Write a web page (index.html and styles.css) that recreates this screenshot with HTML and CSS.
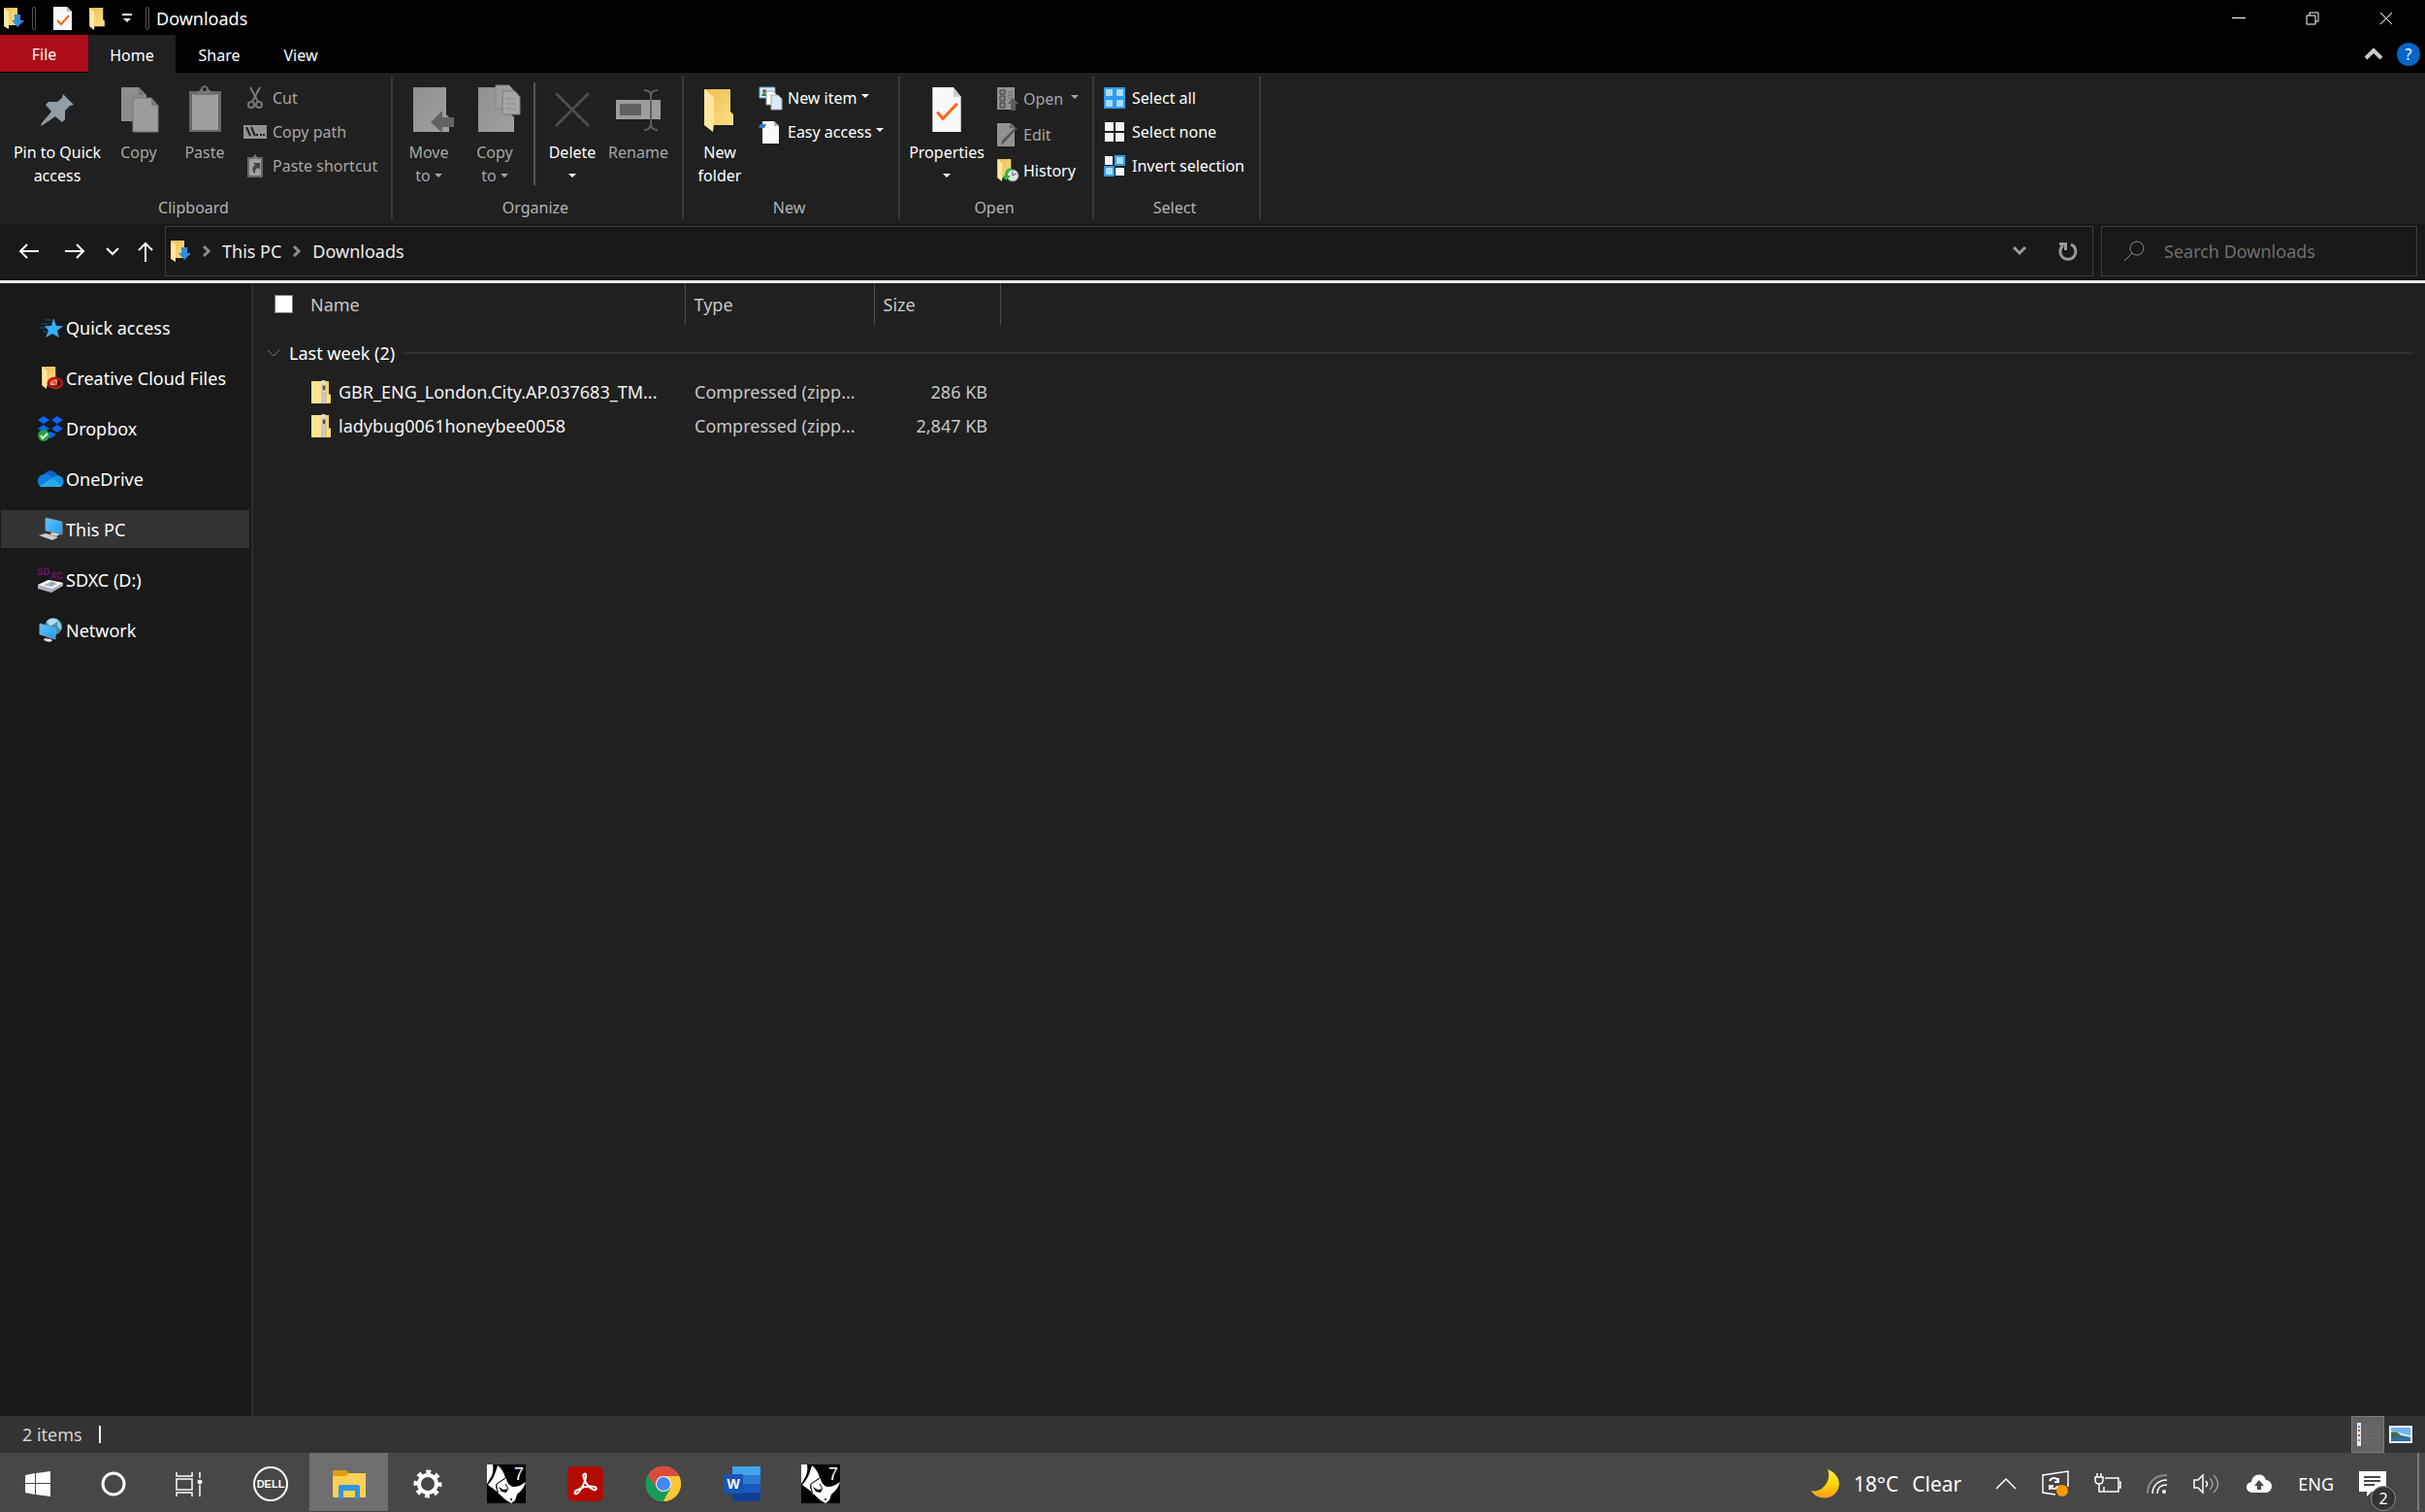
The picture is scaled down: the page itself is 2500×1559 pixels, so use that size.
FILE: index.html
```html
<!DOCTYPE html>
<html lang="en">
<head>
    <meta charset="UTF-8">
    <title>Downloads</title>
    <link rel="stylesheet" href="styles.css">
</head>
<body>
    <!-- shared icons -->
    <svg class="sprite" width="0" height="0" aria-hidden="true">
        <defs>
            <linearGradient id="folder-back" x1="0" y1="0" x2="1" y2="1">
                <stop offset="0" stop-color="#e9bd52"/>
                <stop offset="1" stop-color="#ffe086"/>
            </linearGradient>
            <linearGradient id="moon-fill" x1="0" y1="0" x2="0" y2="1">
                <stop offset="0" stop-color="#ffe94a"/>
                <stop offset="0.5" stop-color="#ffd800"/>
                <stop offset="1" stop-color="#ff9d1c"/>
            </linearGradient>
            <linearGradient id="screen" x1="0" y1="0" x2="1" y2="1">
                <stop offset="0" stop-color="#63c8ff"/>
                <stop offset="1" stop-color="#1c97f0"/>
            </linearGradient>
            <linearGradient id="grey-fill" x1="0" y1="0" x2="1" y2="1">
                <stop offset="0" stop-color="#8f8f8f"/>
                <stop offset="1" stop-color="#a0a0a0"/>
            </linearGradient>
        </defs>
        <symbol id="folder" viewBox="0 0 30 44">
            <path d="M0 0h27v23l3 3v11H6z" fill="url(#folder-back)"/>
            <path d="M0 0l10 8v28l-1 8L0 37z" fill="#ffe7a0"/>
        </symbol>
        <symbol id="folder-down" viewBox="0 0 21 24">
            <path d="M0 1h14v18H4z" fill="url(#folder-back)"/>
            <path d="M0 1l5 4v18l-5-3z" fill="#ffe7a0"/>
            <path d="M11 8h6v6h4l-7 7-6-7h3z" fill="#2f8fe0"/>
        </symbol>
        <symbol id="page-check" viewBox="0 0 30 47">
            <path d="M0 0h22l8 10v37H0z" fill="#f7f9fa"/>
            <path d="M22 0v10h8z" fill="#c8ccce"/>
            <path d="M5 26l6 7 15-16" fill="none" stroke="#ff6210" stroke-width="3"/>
        </symbol>
        <symbol id="zip" viewBox="0 0 20 24">
            <path d="M0 1h18v13l2 1v9H0z" fill="#f5cf68"/>
            <path d="M0 1h10v23H0z" fill="#ffe38e"/>
            <path d="M16 15h4v8h-4z" fill="#ffdd7c"/>
            <path d="M11 1h4v23h-4z" fill="#a9a9a9"/>
            <path d="M13 9v15" stroke="#efefef" stroke-width="3" stroke-dasharray="1 1"/>
            <rect x="10" y="0" width="5" height="5" rx="2" fill="#dcdcdc"/>
            <path d="M12 6h2v4h-2z" fill="#4a4a4a"/>
        </symbol>
        <symbol id="chev-down" viewBox="0 0 16 16">
            <path d="M2 5l6 6 6-6" fill="none" stroke="currentColor" stroke-width="2"/>
        </symbol>
        <symbol id="chev-right" viewBox="0 0 10 14">
            <path d="M2 2l5 5-5 5" fill="none" stroke="#8b8b8b" stroke-width="3"/>
        </symbol>
        <symbol id="rhino" viewBox="0 0 40 40">
            <path d="M0 0h40v40H0z" fill="#000"/>
            <path d="M0 0h6c1 6 0 11-3 15l-3 5z" fill="#fff"/>
            <path d="M11 1c4 3 7 8 8 13l-9 6c-1 3 0 6 2 9L1 21C7 15 9 8 11 1z" fill="#fff"/>
            <path d="M12 19l8-5c0 4 3 8 7 9 5 0 9-2 13-5-2 7-6 10-9 13l-2 6-4 3-5-3-9-8-1-10z" fill="#fff"/>
            <path d="M19 14l-9 6c-1 3 0 6 2 9" fill="none" stroke="#000"/>
            <path d="M12 23l5 3 5-1-2 4-5-1z" fill="#000"/>
            <path d="M19 20l3 5" stroke="#000"/>
            <circle cx="25" cy="36" r="1" fill="#000"/>
            <text x="28" y="16" class="rhino-number">7</text>
        </symbol>
    </svg>

    <header class="title-bar">
        <svg class="app-icon" width="21" height="24"><use href="#folder-down"/></svg>
        <span class="bar-mark"></span>
        <button class="quick-btn" aria-label="Properties"><svg width="19" height="24" viewBox="0 0 19 24"><path d="M0 0h14l5 5v19H0z" fill="#f7f9fa"/><path d="M14 0v5h5z" fill="#b9bdbf"/><path d="M4 14l4 4 8-9" fill="none" stroke="#ff6210" stroke-width="2"/></svg></button>
        <button class="quick-btn" aria-label="New folder"><svg width="16" height="23"><use href="#folder"/></svg></button>
        <button class="quick-btn" aria-label="Customize toolbar"><svg width="10" height="10" viewBox="0 0 10 10"><path d="M0 0h10v2H0zM1 5h8l-4 4z" fill="#fff"/></svg></button>
        <span class="bar-mark"></span>
        <h1>Downloads</h1>
        <div class="window-controls">
            <button aria-label="Minimize"><svg width="14" height="14" viewBox="0 0 14 14"><path d="M0 6h14v1H0z" fill="#fff"/></svg></button>
            <button aria-label="Restore"><svg width="14" height="14" viewBox="0 0 14 14" fill="none" stroke="#fff"><path d="M1 4h9v9H1zM4 4V1h9v9h-3"/></svg></button>
            <button aria-label="Close"><svg width="14" height="14" viewBox="0 0 14 14"><path d="M1 1l12 12M13 1L1 13" stroke="#fff"/></svg></button>
        </div>
    </header>

    <nav class="tabs">
        <button class="tab file">File</button>
        <button class="tab active">Home</button>
        <button class="tab">Share</button>
        <button class="tab view">View</button>
        <div class="tab-tools">
            <button aria-label="Collapse ribbon"><svg width="20" height="13" viewBox="0 0 20 13"><path d="M2 11l8-8 8 8" fill="none" stroke="#c9c9c9" stroke-width="4"/></svg></button>
            <button class="help" aria-label="Help">?</button>
        </div>
    </nav>

    <section class="ribbon">
        <div class="group clipboard">
            <div class="tools">
                <button class="big pin">
                    <svg width="48" height="48" viewBox="0 0 48 48"><path d="M30 9l11 11-4 1-5 5v9l-3 3-7-6L9 41l-2 1 1-3 10-12-6-7 3-3 9 0 5-4z" fill="#919ea5"/></svg>
                    Pin to Quick<br>access
                </button>
                <button class="big copy off">
                    <svg width="48" height="48" viewBox="0 0 48 48"><path d="M6 2h18l8 8v27H6z" fill="#8d8d8d"/><path d="M18 13h19l7 8v27H18z" fill="#9c9c9c" stroke="#777"/><path d="M37 13v8h7z" fill="#777"/><path d="M24 2v8h8z" fill="#777"/></svg>
                    Copy
                </button>
                <button class="big paste off">
                    <svg width="48" height="48" viewBox="0 0 48 48"><path d="M8 6h33v42H8z" fill="#666"/><path d="M11 9h27v37H11z" fill="#9d9d9d"/><path d="M13 10l7-6c1-5 7-5 8 0l7 6z" fill="#757575"/><circle cx="24" cy="4" r="2" fill="#202020"/></svg>
                    Paste
                </button>
                <div class="small-list">
                    <button class="small off"><svg width="24" height="24" viewBox="0 0 24 24" fill="none" stroke="#777" stroke-width="2"><path d="M7 1l8 15M17 1L9 16"/><circle cx="8" cy="19" r="3"/><circle cx="16" cy="19" r="3"/></svg>Cut</button>
                    <button class="small off"><svg width="24" height="24" viewBox="0 0 24 24"><path d="M0 5h24v14H0z" fill="#939393"/><path d="M3 7l4 9M8 7l4 9M13 15h2M17 15h2M20 15h2" stroke="#202020" stroke-width="2"/></svg>Copy path</button>
                    <button class="small off"><svg width="24" height="24" viewBox="0 0 24 24"><path d="M4 3h16v21H4z" fill="#666"/><path d="M6 5h12v17H6z" fill="#a0a0a0"/><path d="M8 5l4-5 4 5z" fill="#777"/><path d="M10 9h7v7l-2-2c-3 1-3 3-3 6-4-3-3-7 0-9z" fill="#444"/></svg>Paste shortcut</button>
                </div>
            </div>
            <div class="group-name">Clipboard</div>
        </div>

        <div class="group organize">
            <div class="tools">
                <button class="big off">
                    <svg width="48" height="48" viewBox="0 0 48 48"><path d="M8 2h34v28l3 3v15H8z" fill="url(#grey-fill)"/><path d="M26 38l12-12v7h12v10H38v6z" fill="#626262"/></svg>
                    <span>Move<br>to <i class="caret"></i></span>
                </button>
                <button class="big off">
                    <svg width="48" height="48" viewBox="0 0 48 48"><path d="M7 2h34v28l3 3v15H7z" fill="url(#grey-fill)"/><path d="M25 0h14l5 6v18H25z" fill="#9e9e9e" stroke="#858585"/><path d="M32 6h13l5 6v18H32z" fill="#a5a5a5" stroke="#7d7d7d"/><path d="M35 14h11M35 19h11M35 24h11" stroke="#8e8e8e"/></svg>
                    <span>Copy<br>to <i class="caret"></i></span>
                </button>
                <span class="tool-divider"></span>
                <button class="big">
                    <svg width="48" height="48" viewBox="0 0 48 48"><path d="M7 8l34 34M41 8L7 42" stroke="#4c4c4c" stroke-width="3"/></svg>
                    <span>Delete<br><i class="caret"></i></span>
                </button>
                <button class="big off">
                    <svg width="48" height="48" viewBox="0 0 48 48"><path d="M1 15h46v20H1z" fill="#9d9d9d"/><path d="M5 19h22v12H5z" fill="#606060"/><path d="M30 5c5 0 7 2 7 6v28c0 4-2 7-7 7M44 5c-5 0-7 2-7 6v28c0 4 2 7 7 7" fill="none" stroke="#5d5d5d" stroke-width="2"/></svg>
                    Rename
                </button>
            </div>
            <div class="group-name">Organize</div>
        </div>

        <div class="group new">
            <div class="tools">
                <button class="big">
                    <svg width="48" height="48" viewBox="0 0 48 48"><use href="#folder" x="8" y="4" width="30" height="44"/></svg>
                    New<br>folder
                </button>
                <div class="small-list">
                    <button class="small"><svg width="24" height="24" viewBox="0 0 24 24"><path d="M1 1h16v11H1z" fill="#d3effc" stroke="#5fa3cd"/><path d="M3 10c1-4 5-4 6 0z" fill="#2c7c49"/><circle cx="6" cy="5" r="2" fill="#8a5638"/><path d="M8 5h7l3 3v11H8z" fill="#fff" stroke="#999"/><path d="M13 9h7l4 4v11H13z" fill="#dae9fb" stroke="#aaa"/></svg>New item<i class="caret"></i></button>
                    <button class="small"><svg width="24" height="24" viewBox="0 0 24 24"><path d="M4 1h12l5 5v18H4z" fill="#f7f9fa"/><path d="M16 1v5h5z" fill="#aeb2b4"/><path d="M0 7l2-3h6l-2 4-4 0z" fill="#2d7cc2"/></svg>Easy access<i class="caret"></i></button>
                </div>
            </div>
            <div class="group-name">New</div>
        </div>

        <div class="group open">
            <div class="tools">
                <button class="big properties">
                    <svg width="48" height="48" viewBox="0 0 48 48"><use href="#page-check" x="6" y="2" width="36" height="46"/></svg>
                    <span>Properties<br><i class="caret"></i></span>
                </button>
                <div class="small-list">
                    <button class="small off"><svg width="24" height="24" viewBox="0 0 24 24"><path d="M1 0h18v23H1z" fill="#929292"/><path d="M4 3h5v4H4zM4 9h5v5H4zM4 16h5v5H4z" fill="#858585" stroke="#3c3c3c"/><path d="M12 5h5M12 8h5M12 11h5" stroke="#666"/><path d="M12 17l5-6 6 6h-3v7h-5v-7z" fill="#5c5c5c"/></svg>Open<i class="caret far"></i></button>
                    <button class="small off"><svg width="24" height="24" viewBox="0 0 24 24"><path d="M1 0h14l4 4v20H1z" fill="#929292"/><path d="M14 0v5h5z" fill="#666"/><path d="M22 5L8 20l-3 3 1-5L20 4z" fill="#555"/></svg>Edit</button>
                    <button class="small"><svg width="24" height="24" viewBox="0 0 24 24"><use href="#folder" x="1" y="0" width="16" height="23"/><circle cx="17" cy="17" r="6" fill="#e0e3e6" stroke="#8d8d8d"/><path d="M17 13v4l4-2" fill="none" stroke="#555"/><path d="M16 9c-5 0-7 3-7 8H6l4 5 5-5h-3c0-3 1-5 4-5z" fill="#2eb83a"/></svg>History</button>
                </div>
            </div>
            <div class="group-name">Open</div>
        </div>

        <div class="group select">
            <div class="tools">
                <div class="small-list">
                    <button class="small"><svg width="24" height="24" viewBox="0 0 24 24"><path d="M2 2h9v9H2zM13 2h9v9h-9zM2 13h9v9H2zM13 13h9v9h-9z" fill="#a9dbff" stroke="#2e9bf2" stroke-width="2"/></svg>Select all</button>
                    <button class="small"><svg width="24" height="24" viewBox="0 0 24 24"><path d="M2 2h9v9H2zM13 2h9v9h-9zM2 13h9v9H2zM13 13h9v9h-9z" fill="#f5f6f7"/></svg>Select none</button>
                    <button class="small"><svg width="24" height="24" viewBox="0 0 24 24"><path d="M2 2h8v9H2zM13 14h9v8h-9z" fill="#f5f6f7"/><path d="M13 2h9v9h-9zM2 13h9v9H2z" fill="#a9dbff" stroke="#2e9bf2" stroke-width="2"/></svg>Invert selection</button>
                </div>
            </div>
            <div class="group-name">Select</div>
        </div>
    </section>

    <div class="nav-row">
        <div class="nav-buttons">
            <button aria-label="Back"><svg width="28" height="24" viewBox="0 0 28 24"><path d="M24 12H5M12 5l-7 7 7 7" fill="none" stroke="#fff" stroke-width="2"/></svg></button>
            <button aria-label="Forward"><svg width="28" height="24" viewBox="0 0 28 24"><path d="M5 12h19M17 5l7 7-7 7" fill="none" stroke="#fff" stroke-width="2"/></svg></button>
            <button aria-label="Recent locations"><svg width="16" height="16"><use href="#chev-down"/></svg></button>
            <button aria-label="Up"><svg width="16" height="22" viewBox="0 0 16 22"><path d="M8 22V3M1 10l7-7 7 7" fill="none" stroke="#fff" stroke-width="2"/></svg></button>
        </div>
        <div class="address">
            <svg width="21" height="24"><use href="#folder-down"/></svg>
            <svg class="crumb-arrow" width="10" height="14"><use href="#chev-right"/></svg>
            <a href="#">This PC</a>
            <svg class="crumb-arrow" width="10" height="14"><use href="#chev-right"/></svg>
            <a href="#">Downloads</a>
            <div class="address-tools">
                <button aria-label="Previous locations"><svg width="16" height="12" viewBox="0 0 16 12"><path d="M2 2l6 6 6-6" fill="none" stroke="#999" stroke-width="3"/></svg></button>
                <button aria-label="Refresh"><svg width="20" height="20" viewBox="0 0 20 20"><path d="M13 3a8 8 0 1 1-8 1" fill="none" stroke="#999" stroke-width="3"/><path d="M1 1h8v8H6V4H1z" fill="#999"/></svg></button>
            </div>
        </div>
        <label class="search">
            <svg width="22" height="22" viewBox="0 0 22 22" fill="none" stroke="#888" stroke-width="1"><circle cx="14" cy="8" r="7"/><path d="M9 13l-8 8"/></svg>
            <input type="text" placeholder="Search Downloads" aria-label="Search Downloads">
        </label>
    </div>

    <main>
        <aside class="sidebar">
            <ul>
                <li><a href="#"><svg width="28" height="28" viewBox="0 0 28 28"><path d="M17 4l3 8h7l-6 5 2 7-7-4-7 4 3-7-4-5h7z" fill="#30b0ff"/><path d="M8 6h7M4 10h8M3 14h6M6 18h5" stroke="#145a86"/></svg>Quick access</a></li>
                <li><a href="#"><svg width="28" height="28" viewBox="0 0 28 28"><use href="#folder" x="4" y="2" width="18" height="23"/><ellipse cx="19" cy="19" rx="7" ry="5" fill="none" stroke="#b41616" stroke-width="3"/><path d="M14 20c0-5 6-4 6 1M15 17l5 4" fill="none" stroke="#f0563f" stroke-width="2"/></svg>Creative Cloud Files</a></li>
                <li><a href="#"><svg width="28" height="28" viewBox="0 0 28 28"><path d="M7 1l6 4-6 4-6-4zM21 1l6 4-6 4-6-4zM7 10l6 4-6 4-6-4zM21 10l6 4-6 4-6-4zM14 17l6 3-6 4-6-4z" fill="#0b64ff"/><circle cx="7" cy="21" r="6" fill="#23a436"/><path d="M4 21l2 3 5-5" fill="none" stroke="#fff" stroke-width="2"/></svg>Dropbox</a></li>
                <li><a href="#"><svg width="28" height="28" viewBox="0 0 28 28"><path d="M7 11C9 4 18 3 21 10l3 4-14 2z" fill="#0d65bd"/><path d="M7 9c4-1 7 1 10 4L4 22C-1 19 0 10 7 9z" fill="#0f7ddb"/><path d="M15 14c3-4 6-5 9-3 5 2 5 10-1 11z" fill="#1590df"/><path d="M3 21l13-8 10 8c-1 1-2 1-3 1H6c-1 0-2 0-3-1z" fill="#29a8ef"/></svg>OneDrive</a></li>
                <li><a class="current" href="#"><svg width="28" height="28" viewBox="0 0 28 28"><path d="M9 2l17 4v13L9 15z" fill="url(#screen)" stroke="#7f98a8"/><path d="M16 17l8 2-4 2-7-2z" fill="#d6dade"/><path d="M2 20l7-2 13 4-6 3z" fill="#c9ced2"/></svg>This PC</a></li>
                <li><a href="#"><svg width="28" height="28" viewBox="0 0 28 28"><text x="0" y="9" class="sd-text">SD</text><text x="14" y="13" class="sd-text">XC</text><path d="M1 19l11-5 15 3v3l-12 7-14-4z" fill="#aeb2b8"/><path d="M1 19l11-5 15 3-11 6z" fill="#f5f6f8"/><path d="M7 19l6-2 8 1-6 3z" fill="#8fb6c9"/><path d="M12 17l4-1 4 1-3 1z" fill="#9c9845"/></svg>SDXC (D:)</a></li>
                <li><a href="#"><svg width="28" height="28" viewBox="0 0 28 28"><circle cx="17" cy="10" r="9" fill="#3e93b8"/><path d="M10 5c3-4 9-4 12-1l-5 4-4 1z" fill="#b4dcea"/><path d="M21 4c4 2 5 6 4 10l-4-4z" fill="#8fc7db"/><path d="M3 7l16 5v11L3 18z" fill="url(#screen)" stroke="#89a2b1"/><path d="M8 22l7 1 1 2-4 1-5-2z" fill="#d8dcdf"/></svg>Network</a></li>
            </ul>
        </aside>

        <section class="files">
            <table>
                <colgroup>
                    <col class="col-name">
                    <col class="col-type">
                    <col class="col-size">
                    <col>
                </colgroup>
                <thead>
                    <tr>
                        <th><span class="name-head"><input type="checkbox" aria-label="Select all files">Name</span></th>
                        <th>Type</th>
                        <th>Size</th>
                        <td></td>
                    </tr>
                </thead>
                <tbody>
                    <tr class="group-row">
                        <td colspan="4"><div><svg width="16" height="16" viewBox="0 0 16 16"><path d="M2 5l6 6 6-6" fill="none" stroke="#777"/></svg>Last week (2)<span class="rule"></span></div></td>
                    </tr>
                    <tr>
                        <td class="name"><div><svg width="20" height="24"><use href="#zip"/></svg>GBR_ENG_London.City.AP.037683_TM...</div></td>
                        <td>Compressed (zipp...</td>
                        <td class="size">286 KB</td>
                        <td></td>
                    </tr>
                    <tr>
                        <td class="name"><div><svg width="20" height="24"><use href="#zip"/></svg>ladybug0061honeybee0058</div></td>
                        <td>Compressed (zipp...</td>
                        <td class="size">2,847 KB</td>
                        <td></td>
                    </tr>
                </tbody>
            </table>
        </section>
    </main>

    <div class="status-bar">
        <span>2 items</span>
        <span class="status-mark"></span>
        <div class="view-buttons">
            <button class="on" aria-label="Details view"><svg width="24" height="24" viewBox="0 0 24 24"><path d="M1 0h4v24H1z" fill="#e8eaee"/><path d="M2 3h2v2H2zM2 17h2v2H2z" fill="#5b96cf"/><path d="M2 7h2v2H2zM2 12h2v2H2z" fill="#cf4d3a"/><path d="M7 4h7M16 4h8M7 8h7M16 8h8M7 12h7M16 12h8M7 16h7M16 16h8M7 20h7M16 20h8" stroke="#707070"/></svg></button>
            <button aria-label="Large icons view"><svg width="24" height="18" viewBox="0 0 24 18"><path d="M0 0h24v18H0z" fill="#f2f5f8"/><path d="M2 2h20v14H2z" fill="#6fb2f5"/><path d="M2 5l8 2 12 3v3H2z" fill="#cfe5f5"/><path d="M2 7c4-2 7 0 10 3l10 2H2z" fill="#3d6b54"/><path d="M2 12h20v4H2z" fill="#2f6ea8"/></svg></button>
        </div>
    </div>

    <footer class="taskbar">
        <div class="system-buttons">
            <button aria-label="Start"><svg width="28" height="28" viewBox="0 0 28 28"><path d="M1 5l10-2v10H1zM12 3l15-2v12H12zM1 14h10v11L1 23zM12 14h15v13l-15-2z" fill="#fff"/></svg></button>
            <button aria-label="Cortana"><svg width="28" height="28" viewBox="0 0 28 28"><circle cx="14" cy="14" r="11" fill="none" stroke="#fff" stroke-width="3"/></svg></button>
            <button aria-label="Task view"><svg width="28" height="28" viewBox="0 0 28 28" fill="none" stroke="#fff"><path d="M1 2v4h16V2M1 9h16v11H1zM1 27v-4h16v4M25 2v6M25 15v12" stroke-width="1.5"/><circle cx="25" cy="12" r="2" fill="#fff"/></svg></button>
        </div>
        <div class="apps">
            <button aria-label="Dell"><svg width="38" height="38" viewBox="0 0 38 38"><circle cx="19" cy="19" r="17" fill="none" stroke="#fff" stroke-width="2"/><text x="19" y="23" class="dell-text">DELL</text></svg></button>
            <button class="on" aria-label="File Explorer"><svg width="36" height="30" viewBox="0 0 36 30"><path d="M1 1h14l3 3h17v24H1z" fill="#e09e06"/><path d="M1 7h13l4-3h17v24c0 1-1 1-1 1H2s-1 0-1-1z" fill="#ffd055"/><path d="M7 30V18c0-1 1-2 2-2h18c1 0 2 1 2 2v12h-5v-8H12v8z" fill="#3293df"/></svg></button>
            <button aria-label="Settings"><svg width="32" height="32" viewBox="0 0 32 32"><circle cx="16" cy="16" r="9" fill="none" stroke="#fff" stroke-width="4"/><circle cx="16" cy="16" r="12" fill="none" stroke="#fff" stroke-width="5" stroke-dasharray="4.7 4.725" stroke-dashoffset="2"/></svg></button>
            <button aria-label="Rhino 7"><svg width="40" height="40"><use href="#rhino"/></svg></button>
            <button aria-label="Acrobat"><svg width="38" height="38" viewBox="0 0 38 38"><rect x="1" y="1" width="37" height="36" rx="6" fill="#b30b00"/><path d="M18 9c2-2 3 1 1 7-2 5-5 11-8 13-3 1-4-2 1-4 5-3 12-4 17-3 3 1 2 4-1 3-4-1-9-7-10-12-1-3-1-4 0-4z" fill="none" stroke="#fff" stroke-width="2"/></svg></button>
            <button aria-label="Chrome"><svg width="38" height="38" viewBox="0 0 38 38"><circle cx="19" cy="19" r="18" fill="#fbc937"/><path d="M3 10A18 18 0 0 0 19 37l8-14-8-4z" fill="#189b58"/><path d="M3 10l9 13 7-12h16A18 18 0 0 0 3 10z" fill="#d94b3f"/><path d="M27 22l-8 15a18 18 0 0 0 16-26H19z" fill="#fbc937"/><circle cx="19" cy="19" r="8" fill="#f1f3f4"/><circle cx="19" cy="19" r="7" fill="#4587ef"/></svg></button>
            <button aria-label="Word"><svg width="40" height="38" viewBox="0 0 40 38"><path d="M10 1h29v9H10z" fill="#41a5ee"/><path d="M10 10h29v9H10z" fill="#2b7cd3"/><path d="M10 19h29v9H10z" fill="#185abd"/><path d="M10 28h29v9H10z" fill="#103f91"/><rect x="1" y="9" width="20" height="20" rx="1" fill="#1854b5"/><text x="11" y="24" class="word-text">W</text></svg></button>
            <button aria-label="Rhino 7"><svg width="40" height="40"><use href="#rhino"/></svg></button>
        </div>
        <div class="tray">
            <button class="weather"><svg width="32" height="32" viewBox="0 0 32 32"><path d="M19 1c13 5 15 17 8 25-7 7-19 6-25-3 4 1 9 0 12-3 6-5 8-13 5-19z" fill="url(#moon-fill)"/></svg><span>18°C</span><span>Clear</span></button>
            <button aria-label="Hidden icons"><svg width="22" height="14" viewBox="0 0 22 14"><path d="M1 12L11 2l10 10" fill="none" stroke="#fff" stroke-width="1.5"/></svg></button>
            <button aria-label="Update"><svg width="28" height="28" viewBox="0 0 28 28" fill="none" stroke="#fff" stroke-width="2"><path d="M14 25L1 23V5l26-4v16" stroke-width="1.5"/><path d="M8 11c2-4 7-4 9 0M17 8v4h-4M17 16c-2 4-7 4-9 0M8 20v-4h4"/><circle cx="21" cy="21" r="6" fill="#ff9900" stroke="none"/></svg></button>
            <button aria-label="Battery"><svg width="28" height="24" viewBox="0 0 28 24" fill="none" stroke="#fff" stroke-width="1.5"><path d="M11 6h14v14H10M26 10h1v6h-1M3 1v4M7 1v4M1 5h8v3c0 3-2 4-4 4s-4-1-4-4zM5 12v8h5v-5"/></svg></button>
            <button aria-label="Wi-Fi"><svg width="22" height="22" viewBox="0 0 22 22" fill="none" stroke="#fff" stroke-width="2"><path d="M1 21C1 9 9 2 21 2" stroke="#8a8a8a"/><path d="M6 21C6 13 12 7 21 7M11 21c0-6 4-9 10-9" stroke-width="1.5"/><circle cx="18" cy="19" r="1" fill="#fff"/></svg></button>
            <button aria-label="Volume"><svg width="28" height="24" viewBox="0 0 28 24" fill="none" stroke="#fff" stroke-width="1.5"><path d="M1 8h4l5-5v18l-5-5H1zM13 9c2 2 2 4 0 6"/><path d="M17 6c4 4 4 8 0 12M21 3c6 6 6 12 0 18" stroke="#999"/></svg></button>
            <button aria-label="Cloud upload"><svg width="28" height="20" viewBox="0 0 28 20"><path d="M7 19C-1 18-1 9 6 8 7-1 19-2 21 6c8 1 8 12 0 13z" fill="#fff"/><path d="M14 6l5 6h-3v4h-4v-4H9z" fill="#474747"/></svg></button>
            <button class="language">ENG</button>
            <button class="notify" aria-label="Notifications"><svg width="28" height="26" viewBox="0 0 28 26"><path d="M0 0h28v21H13l-5 5v-5H0z" fill="#fff"/><path d="M5 6h17M5 10h17M5 14h11" stroke="#474747" stroke-width="2"/></svg><span class="badge">2</span></button>
            <span class="desktop-edge"></span>
        </div>
    </footer>
</body>
</html>
```

FILE: styles.css
```css
* {
    box-sizing: border-box;
}

body {
    margin: 0;
    height: 100vh;
    display: flex;
    flex-direction: column;
    background-color: #202020;
    color: #ffffff;
    font-family: "Noto Sans", "Open Sans", sans-serif;
    font-size: 18px;
    line-height: 24px;
    overflow: hidden;
}

button {
    margin: 0;
    padding: 0;
    border: none;
    background: none;
    color: inherit;
    font: inherit;
    cursor: pointer;
}

svg {
    display: block;
    flex: none;
    overflow: visible;
}

a {
    color: inherit;
    text-decoration: none;
}

.sprite {
    position: absolute;
}

/* title bar */
.title-bar {
    display: flex;
    align-items: center;
    height: 36px;
    padding: 2px 2px 0 4px;
    background-color: #000000;
}

.title-bar h1 {
    margin: 0 0 0 7px;
    font-size: 18px;
    font-weight: 400;
}

.bar-mark {
    width: 4px;
    height: 24px;
    margin-left: 8px;
    border: 1px solid #555555;
    border-radius: 2px;
}

.quick-btn {
    margin-left: 18px;
}

.quick-btn + .bar-mark {
    margin-left: 14px;
}

.window-controls {
    display: flex;
    margin-left: auto;
}

.window-controls button {
    display: flex;
    justify-content: center;
    width: 76px;
}

/* tabs */
.tabs {
    display: flex;
    height: 39px;
    background-color: #000000;
    font-size: 16px;
}

.tab {
    width: 90px;
    padding-top: 2px;
}

.tab.file {
    width: 91px;
    height: 38px;
    background-color: #ac0d19;
}

.tab.active {
    background-color: #202020;
}

.tab.view {
    width: 78px;
}

.tab-tools {
    display: flex;
    align-items: center;
    gap: 14px;
    margin-left: auto;
    padding-right: 5px;
}

.help {
    width: 24px;
    height: 24px;
    border-radius: 12px;
    background-color: #0067c5;
}

/* ribbon */
.ribbon {
    display: flex;
    height: 156px;
    padding: 4px 0 5px;
    background-color: #202020;
    font-size: 16px;
}

.group {
    display: flex;
    flex-direction: column;
    justify-content: space-between;
    border-right: 2px solid #383838;
}

.tools {
    display: flex;
    padding: 0 8px 0 3px;
}

.group-name {
    padding-right: 4px;
    color: #b4b4b4;
    text-align: center;
}

.clipboard {
    width: 405px;
}

.organize {
    width: 300px;
}

.new {
    width: 223px;
}

.open {
    width: 200px;
}

.select {
    width: 172px;
}

.big {
    display: flex;
    flex-direction: column;
    align-items: center;
    width: 68px;
    height: 116px;
    padding-top: 9px;
    white-space: nowrap;
}

.big svg {
    margin-bottom: 9px;
}

.big.pin {
    width: 112px;
}

.big.copy {
    width: 56px;
}

.big.paste {
    width: 80px;
}

.big.properties {
    width: 90px;
}

.off {
    color: #a6a6a6;
}

.small-list {
    padding: 4px 0 0 6px;
}

.clipboard .small-list {
    padding-left: 0;
}

.small {
    display: flex;
    align-items: center;
    gap: 6px;
    height: 35px;
    white-space: nowrap;
}

.open .small {
    height: 37px;
    gap: 4px;
}

.caret {
    display: inline-block;
    border: 4px solid transparent;
    border-top-color: currentColor;
    border-bottom: none;
    vertical-align: middle;
}

.big .caret {
    margin-bottom: 4px;
}

.small .caret {
    margin-left: -2px;
    margin-bottom: 4px;
}

.small .caret.far {
    margin-left: 4px;
}

.tool-divider {
    width: 2px;
    height: 106px;
    margin: 6px 4px 0 6px;
    background-color: #555555;
}

/* address row */
.nav-row {
    display: flex;
    align-items: center;
    gap: 8px;
    height: 61px;
    padding: 0 8px 2px 16px;
    border-bottom: 3px solid #e4e8e6;
    background-color: #191919;
}

.nav-buttons {
    display: flex;
    align-items: center;
    gap: 18px;
    margin-right: 4px;
}

.address,
.search {
    display: flex;
    align-items: center;
    height: 52px;
    border: 1px solid #3d3d3d;
}

.address {
    flex: 1;
    padding-left: 5px;
    color: #ececec;
}

.crumb-arrow {
    margin: 0 11px;
}

.address-tools {
    display: flex;
    height: 100%;
    margin-left: auto;
}

.address-tools button {
    display: flex;
    align-items: center;
    justify-content: center;
    width: 50px;
}

.search {
    gap: 20px;
    width: 326px;
    padding: 0 12px 0 22px;
}

.search input {
    flex: 1;
    min-width: 0;
    padding: 0;
    border: none;
    outline: none;
    background: none;
    color: #ffffff;
    font: inherit;
}

.search input::placeholder {
    color: #6f6f6f;
    opacity: 1;
}

/* content */
main {
    flex: 1;
    display: flex;
    min-height: 0;
}

.sidebar {
    width: 261px;
    padding: 26px 2px 0 1px;
    border-right: 2px solid #2c2c2c;
    background-color: #191919;
}

.sidebar ul {
    display: flex;
    flex-direction: column;
    gap: 13px;
    margin: 0;
    padding: 0;
    list-style: none;
}

.sidebar a {
    display: flex;
    align-items: center;
    gap: 2px;
    height: 39px;
    padding-left: 37px;
}

.sidebar a.current {
    background-color: #333333;
}

.sd-text {
    font-family: "Liberation Mono", monospace;
    font-size: 11px;
    fill: #84108a;
}

.files {
    flex: 1;
}

table {
    width: 100%;
    border-collapse: collapse;
    table-layout: fixed;
    color: #c8c8c8;
}

.col-name {
    width: 445px;
}

.col-type {
    width: 195px;
}

.col-size {
    width: 130px;
}

th {
    height: 43px;
    padding: 0 0 0 9px;
    border-right: 1px solid #4a4a4a;
    font-weight: 400;
    text-align: left;
}

td {
    height: 35px;
    padding: 0 0 0 10px;
    white-space: nowrap;
}

.name-head {
    display: flex;
    align-items: center;
    gap: 18px;
    padding-left: 13px;
}

.name-head input {
    appearance: none;
    width: 19px;
    height: 19px;
    margin: 0;
    border: 1px solid #777777;
    background-color: #ffffff;
}

.group-row td {
    height: 51px;
    padding: 6px 12px 0 13px;
}

.group-row div {
    display: flex;
    align-items: center;
    gap: 8px;
    color: #ffffff;
}

.rule {
    flex: 1;
    height: 2px;
    background-color: #2f2f2f;
}

.name div {
    display: flex;
    align-items: center;
    gap: 8px;
    padding-left: 50px;
    color: #f4f4f4;
}

.size {
    padding-right: 13px;
    text-align: right;
}

/* status bar */
.status-bar {
    display: flex;
    align-items: center;
    gap: 17px;
    height: 38px;
    padding: 0 8px 0 23px;
    background-color: #333333;
    color: #d4d4d4;
}

.status-mark {
    width: 2px;
    height: 18px;
    background-color: #f0f0f0;
}

.view-buttons {
    display: flex;
    height: 100%;
    margin-left: auto;
}

.view-buttons button {
    display: flex;
    align-items: center;
    justify-content: center;
    width: 34px;
}

.view-buttons .on {
    border: 1px solid #7a7a7a;
    background-color: #636363;
}

/* taskbar */
.taskbar {
    display: flex;
    height: 61px;
    padding-bottom: 1px;
    background-color: #474747;
}

.system-buttons,
.apps,
.tray {
    display: flex;
}

.system-buttons button,
.apps button {
    display: flex;
    align-items: center;
    justify-content: center;
    width: 78px;
    padding-top: 4px;
}

.apps {
    margin-left: 4px;
}

.apps button {
    width: 81px;
}

.apps .on {
    background-color: #6e6e6e;
}

.rhino-number {
    font-family: "Liberation Sans", sans-serif;
    font-size: 18px;
    fill: #ffffff;
}

.dell-text {
    font-family: "Liberation Sans", sans-serif;
    font-size: 11px;
    font-weight: 700;
    fill: #ffffff;
    text-anchor: middle;
}

.word-text {
    font-family: "Liberation Sans", sans-serif;
    font-size: 14px;
    font-weight: 700;
    fill: #ffffff;
    text-anchor: middle;
}

.tray {
    align-items: center;
    gap: 26px;
    margin-left: auto;
    padding-right: 6px;
}

.tray button {
    padding-top: 4px;
}

.tray .weather {
    display: flex;
    align-items: center;
    gap: 14px;
    margin-right: 9px;
    font-size: 21px;
}

.notify {
    position: relative;
}

.badge {
    position: absolute;
    top: 19px;
    left: 12px;
    width: 26px;
    height: 26px;
    border: 1px solid #8d8d8d;
    border-radius: 13px;
    background-color: #333333;
    font-size: 16px;
    text-align: center;
}

.desktop-edge {
    align-self: stretch;
    width: 2px;
    margin-left: 6px;
    background-color: #7c7c7c;
}
```
